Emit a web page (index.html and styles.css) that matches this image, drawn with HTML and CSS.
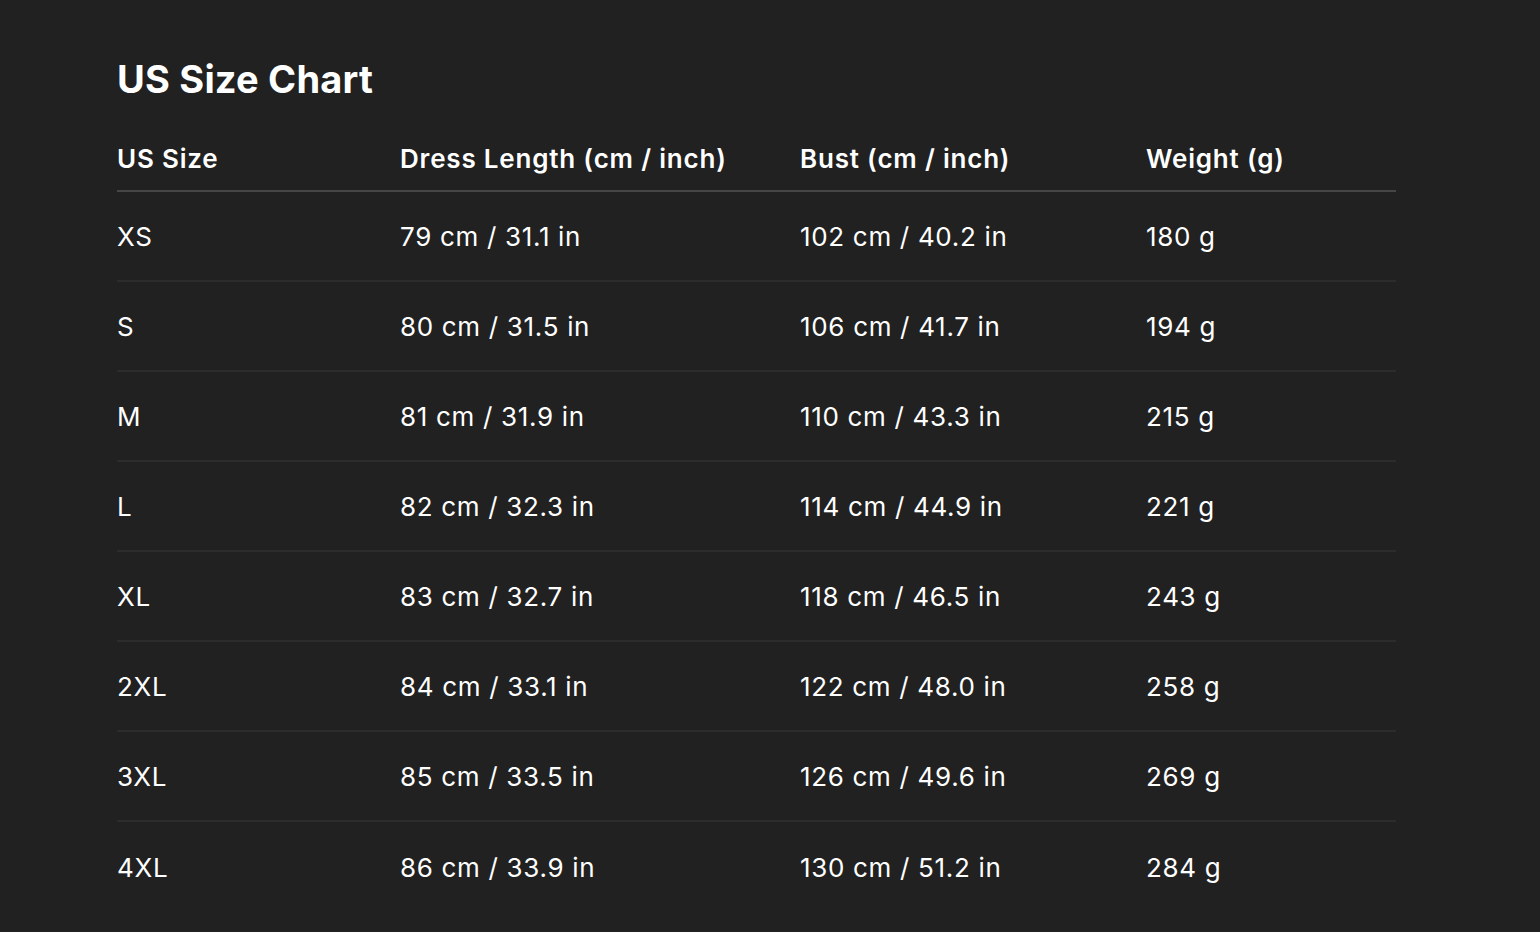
FILE: index.html
```html
<!DOCTYPE html>
<html lang="en">
<head>
<meta charset="utf-8">
<title>US Size Chart</title>
<link rel="stylesheet" href="styles.css">
</head>
<body>
<main class="page">
  <h1 class="title">US Size Chart</h1>
  <table class="chart">
    <colgroup>
      <col class="c1"><col class="c2"><col class="c3"><col class="c4">
    </colgroup>
    <thead>
      <tr><th>US Size</th><th>Dress Length (cm / inch)</th><th>Bust (cm / inch)</th><th>Weight (g)</th></tr>
    </thead>
    <tbody>
      <tr><td>XS</td><td>79 cm / 31.1 in</td><td>102 cm / 40.2 in</td><td>180 g</td></tr>
      <tr><td>S</td><td>80 cm / 31.5 in</td><td>106 cm / 41.7 in</td><td>194 g</td></tr>
      <tr><td>M</td><td>81 cm / 31.9 in</td><td>110 cm / 43.3 in</td><td>215 g</td></tr>
      <tr><td>L</td><td>82 cm / 32.3 in</td><td>114 cm / 44.9 in</td><td>221 g</td></tr>
      <tr><td>XL</td><td>83 cm / 32.7 in</td><td>118 cm / 46.5 in</td><td>243 g</td></tr>
      <tr><td>2XL</td><td>84 cm / 33.1 in</td><td>122 cm / 48.0 in</td><td>258 g</td></tr>
      <tr><td>3XL</td><td>85 cm / 33.5 in</td><td>126 cm / 49.6 in</td><td>269 g</td></tr>
      <tr><td>4XL</td><td>86 cm / 33.9 in</td><td>130 cm / 51.2 in</td><td>284 g</td></tr>
    </tbody>
  </table>
</main>
</body>
</html>
```
FILE: styles.css
```css
html, body {
  margin: 0;
  background: #212121;
  color: #ffffff;
  font-family: Inter, "Noto Sans", sans-serif;
}
.page {
  padding: 56px 0 0 117px;
}
.title {
  margin: 0 0 40px;
  font-size: 38px;
  line-height: 46px;
  font-weight: 700;
  letter-spacing: 0.2px;
}
.chart {
  width: 1279px;
  border-collapse: collapse;
  table-layout: fixed;
}
.c1 { width: 283px; }
.c2 { width: 400px; }
.c3 { width: 346px; }
.c4 { width: 250px; }
.chart th {
  text-align: left;
  font-size: 26px;
  font-weight: 600;
  line-height: 32px;
  letter-spacing: 0.8px;
  padding: 1px 0 15px;
  border-bottom: 2px solid #464646;
}
.chart td {
  font-size: 26px;
  font-weight: 400;
  line-height: 32px;
  letter-spacing: 0.68px;
  height: 90px;
  padding: 2px 0 0;
  box-sizing: border-box;
  vertical-align: middle;
  border-bottom: 2px solid #2c2c2c;
}
.chart tbody tr:last-child td {
  border-bottom: none;
}
```
